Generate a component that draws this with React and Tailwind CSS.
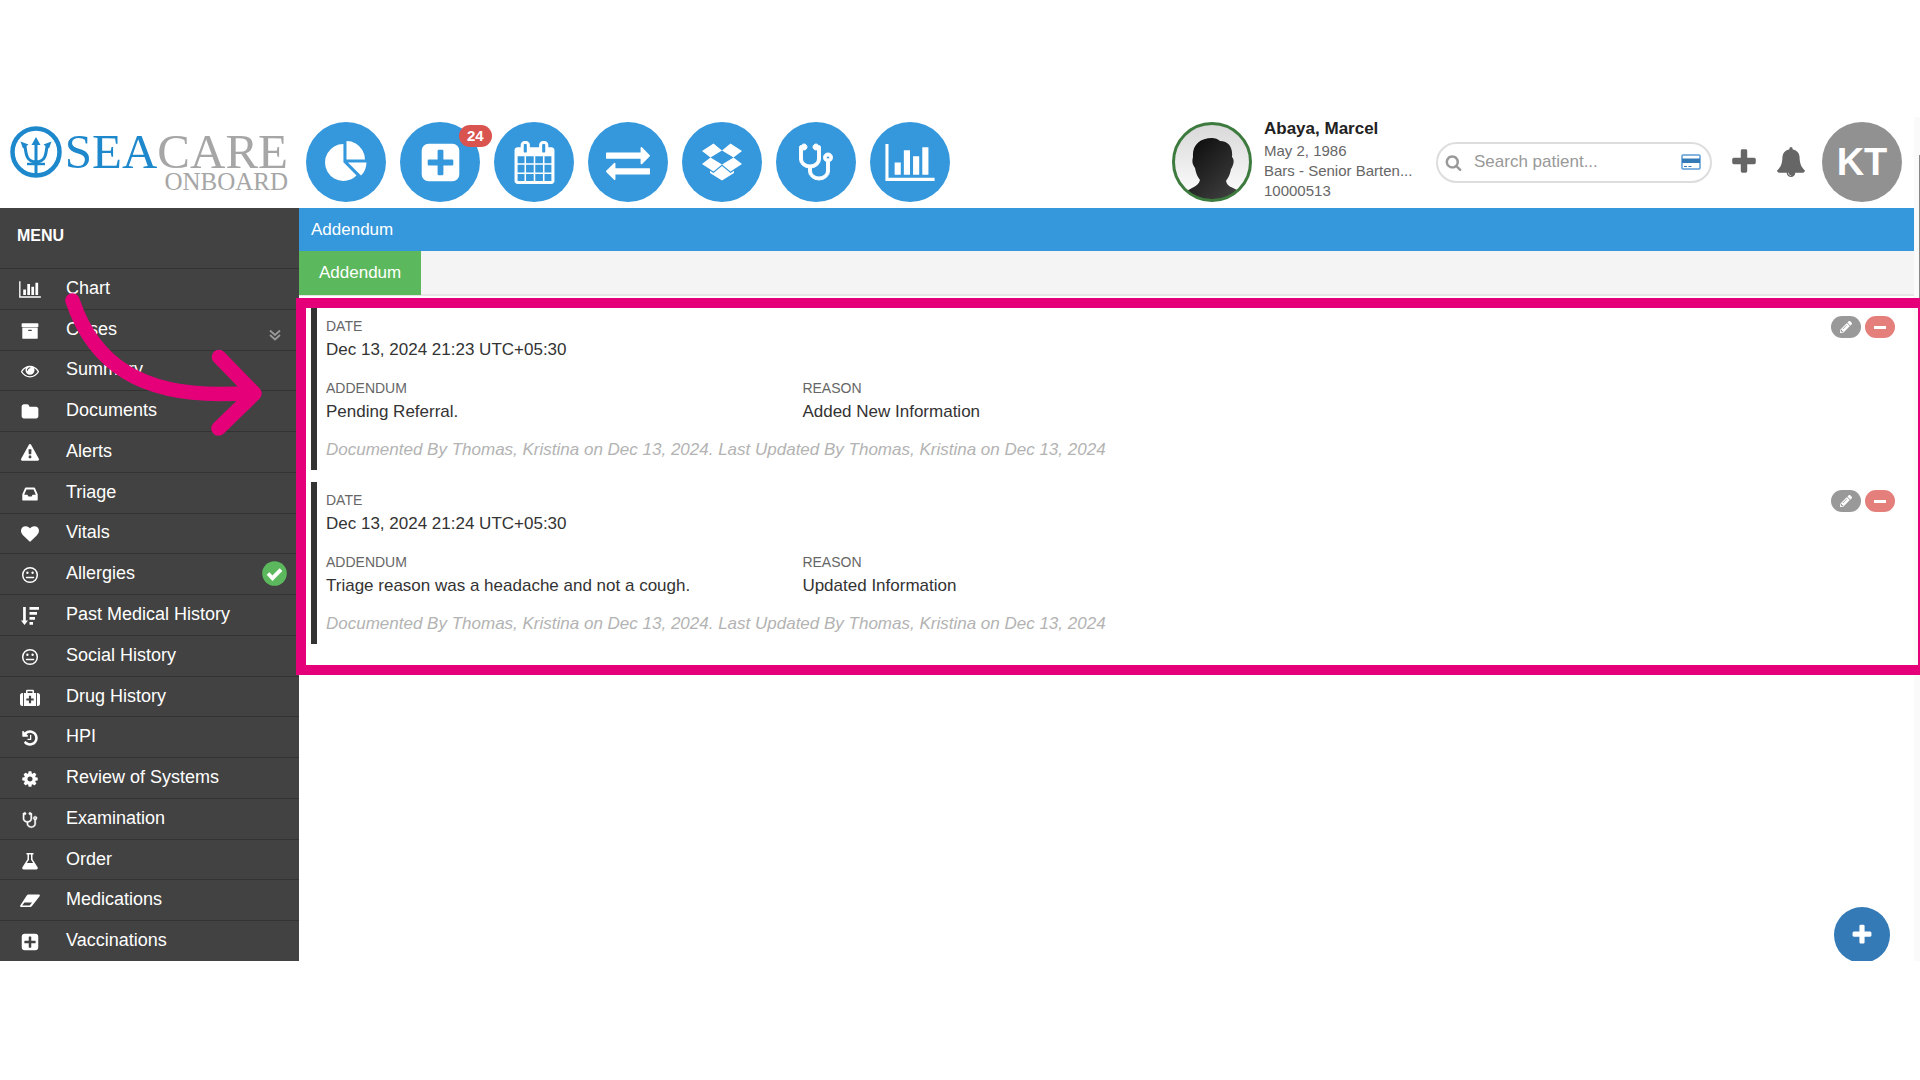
import React, { useState } from 'react';
import { FaPencilAlt } from 'react-icons/fa';

// --- SVG Icons ---
const Glyph = ({ d, className, viewBox = '0 0 1792 1792' }) => (
    <svg xmlns="http://www.w3.org/2000/svg" viewBox={viewBox} fill="currentColor" className={className} aria-hidden="true"><path d={d}></path></svg>
);
const BarChartIcon = ({ className }) => (
    <Glyph className={className} viewBox="0 0 2048 1792" d="M640 896v512h-256v-512h256zm384-512v1024h-256v-1024h256zm1024 1152v128h-2048v-1536h128v1408h1920zm-640-896v768h-256v-768h256zm384-384v1152h-256v-1152h256z" />
);
const PieChartIcon = ({ className }) => (
    <Glyph className={className} d="M768 890l546 546q-106 108-247.5 168t-298.500 60q-209 0-385.500-103t-279.500-279.500-103-385.500 103-385.500 279.500-279.500 385.500-103v762zm187 6h773q0 157-60 298.500t-168 247.500zm709-128h-768v-768q209 0 385.500 103t279.500 279.500 103 385.500z" />
);
const PlusSquareIcon = ({ className }) => (
    <svg viewBox="0 0 24 24" fill="currentColor" className={className} aria-hidden="true"><path fillRule="evenodd" d="M5 1h14a4 4 0 0 1 4 4v14a4 4 0 0 1-4 4H5a4 4 0 0 1-4-4V5a4 4 0 0 1 4-4zM11 4.500a.7.7 0 0 0-.7.7v5.100H5.200a.7.7 0 0 0-.7.7v2a.7.7 0 0 0 .7.7h5.100v5.100a.7.7 0 0 0 .7.7h2a.7.7 0 0 0 .7-.7v-5.100h5.100a.7.7 0 0 0 .7-.7v-2a.7.7 0 0 0-.7-.7h-5.100V5.200a.7.7 0 0 0-.7-.7z"></path></svg>
);
const CalendarIcon = ({ className }) => (
    <Glyph className={className} d="M192 1664h288v-288h-288v288zm352 0h320v-288h-320v288zm-352-352h288v-320h-288v320zm352 0h320v-320h-320v320zm-352-384h288v-288h-288v288zm736 736h320v-288h-320v288zm-384-736h320v-288h-320v288zm768 736h288v-288h-288v288zm-384-352h320v-320h-320v320zm-352-864v-288q0-13-9.500-22.500t-22.500-9.500h-64q-13 0-22.500 9.500t-9.500 22.500v288q0 13 9.500 22.500t22.500 9.500h64q13 0 22.500-9.500t9.500-22.500zm736 864h288v-320h-288v320zm-384-384h320v-288h-320v288zm384 0h288v-288h-288v288zm32-480v-288q0-13-9.500-22.500t-22.500-9.500h-64q-13 0-22.500 9.500t-9.500 22.500v288q0 13 9.500 22.500t22.500 9.500h64q13 0 22.500-9.500t9.500-22.500zm384-64v1280q0 52-38 90t-90 38h-1408q-52 0-90-38t-38-90v-1280q0-52 38-90t90-38h128v-96q0-66 47-113t113-47h64q66 0 113 47t47 113v96h384v-96q0-66 47-113t113-47h64q66 0 113 47t47 113v96h128q52 0 90 38t38 90z" />
);
const ExchangeIcon = ({ className }) => (
    <Glyph className={className} d="M1792 1184v192q0 13-9.500 22.500t-22.500 9.500h-1376v192q0 13-9.500 22.500t-22.500 9.500q-12 0-24-10l-319-320q-9-9-9-22 0-14 9-23l320-320q9-9 23-9 13 0 22.500 9.500t9.500 22.500v192h1376q13 0 22.500 9.500t9.500 22.500zm0-544q0 14-9 23l-320 320q-9 9-23 9-13 0-22.500-9.500t-9.500-22.500v-192h-1376q-13 0-22.500-9.500t-9.500-22.500v-192q0-13 9.500-22.500t22.500-9.500h1376v-192q0-14 9-23t23-9q12 0 24 10l319 319q9 9 9 23z" />
);
const DropboxIcon = ({ className }) => (
    <Glyph className={className} viewBox="0 0 40 40" d="M11.500 1.500L20 8.500 8.500 15.500 0 9zM28.500 1.500L20 8.500 31.500 15.500 40 9zM8.500 15.500L20 22.500 11.500 29.500 0 22zM31.500 15.500L20 22.500 28.500 29.500 40 22zM20 24L28.500 31 32 28.800V31L20 38.500 8 31V28.800L11.500 31z" />
);
const StethoscopeIcon = ({ className }) => (
    <svg viewBox="0 0 1792 1792" fill="currentColor" stroke="currentColor" strokeWidth="40" className={className} aria-hidden="true"><path d="M1472 704q0-26-19-45t-45-19-45 19-19 45 19 45 45 19 45-19 19-45zm128 0q0 62-35.500 111t-92.500 70v395q0 159-131.500 271.500t-316.500 112.500-316.500-112.500-131.500-271.500v-132q-164-20-274-128t-110-252v-512q0-26 19-45t45-19q6 0 16 2 17-30 47-48t65-18q53 0 90.500 37.500t37.500 90.500-37.500 90.500-90.500 37.500q-33 0-64-18v402q0 106 94 181t226 75 226-75 94-181v-402q-31 18-64 18-53 0-90.500-37.500t-37.500-90.500 37.500-90.500 90.500-37.500q35 0 65 18t47 48q10-2 16-2 26 0 45 19t19 45v512q0 144-110 252t-274 128v132q0 106 94 181t226 75 226-75 94-181v-395q-57-21-92.500-70t-35.500-111q0-80 56-136t136-56 136 56 56 136z"></path></svg>
);
const ArchiveIcon = ({ className }) => (
    <Glyph className={className} d="M1088 832q0-26-19-45t-45-19h-256q-26 0-45 19t-19 45 19 45 45 19h256q26 0 45-19t19-45zm576-192v960q0 26-19 45t-45 19h-1408q-26 0-45-19t-19-45v-960q0-26 19-45t45-19h1408q26 0 45 19t19 45zm64-448v256q0 26-19 45t-45 19h-1536q-26 0-45-19t-19-45v-256q0-26 19-45t45-19h1536q26 0 45 19t19 45z" />
);
const EyeIcon = ({ className }) => (
    <Glyph className={className} d="M1664 960q-152-236-381-353 61 104 61 225 0 185-131.500 316.500t-316.500 131.500-316.500-131.500-131.500-316.500q0-121 61-225-229 117-381 353 133 205 333.500 326.500t434.500 121.500 434.500-121.500 333.500-326.500zm-720-384q0-20-14-34t-34-14q-125 0-214.500 89.500t-89.500 214.500q0 20 14 34t34 14 34-14 14-34q0-86 61-147t147-61q20 0 34-14t14-34zm848 384q0 34-20 69-140 230-376.500 368.500t-499.500 138.500-499.500-139-376.500-368q-20-35-20-69t20-69q140-229 376.500-368t499.500-139 499.500 139 376.500 368q20 35 20 69z" />
);
const FolderIcon = ({ className }) => (
    <Glyph className={className} d="M1728 608v704q0 92-66 158t-158 66h-1216q-92 0-158-66t-66-158v-960q0-92 66-158t158-66h320q92 0 158 66t66 158v32h672q92 0 158 66t66 158z" />
);
const WarningIcon = ({ className }) => (
    <Glyph className={className} d="M1024 1375v-190q0-14-9.500-23.500t-22.500-9.500h-192q-13 0-22.500 9.500t-9.500 23.500v190q0 14 9.500 23.500t22.500 9.500h192q13 0 22.500-9.500t9.500-23.500zm-2-374l18-459q0-12-10-19-13-11-24-11h-220q-11 0-24 11-10 7-10 21l17 457q0 10 10 16.500t24 6.500h185q14 0 23.500-6.500t10.500-16.500zm-14-934l768 1408q35 63-2 126-17 29-46.500 46t-63.500 17h-1536q-34 0-63.500-17t-46.500-46q-37-63-2-126l768-1408q17-31 47-49t65-18 65 18 47 49z" />
);
const InboxIcon = ({ className }) => (
    <Glyph className={className} d="M1151 960h316q-1-3-2.500-8.500t-2.500-7.500l-212-496h-708l-212 496q-1 3-2.500 8.500t-2.500 7.500h316l95 192h320zm513 30v482q0 26-19 45t-45 19h-1408q-26 0-45-19t-19-45v-482q0-62 25-123l238-552q10-25 36.500-42t52.500-17h832q26 0 52.500 17t36.500 42l238 552q25 61 25 123z" />
);
const HeartIcon = ({ className }) => (
    <Glyph className={className} d="M896 1664q-26 0-44-18l-624-602q-10-8-27.500-26t-55.500-65.500-68-97.500-53.500-121-23.500-138q0-220 127-344t351-124q62 0 126.500 21.500t120 58 95.500 68.500 76 68q36-36 76-68t95.500-68.500 120-58 126.500-21.500q224 0 351 124t127 344q0 221-229 450l-623 600q-18 18-44 18z" />
);
const MehIcon = ({ className }) => (
    <svg viewBox="0 0 18 18" fill="none" stroke="currentColor" strokeWidth="1.500" className={className} aria-hidden="true"><circle cx="9" cy="9" r="7.300" /><path d="M5.500 11.500h7" strokeLinecap="round" /><circle cx="6.400" cy="6.700" r="1.200" fill="currentColor" stroke="none" /><circle cx="11.600" cy="6.700" r="1.200" fill="currentColor" stroke="none" /></svg>
);
const SortAmountIcon = ({ className }) => (
    <Glyph className={className} viewBox="0 0 18 18" d="M2.100 0h2.700v13.500h2.200L3.500 18 0 13.500h2.100zM8.500 0H18v2.800H8.500zM8.500 5H16v2.800H8.500zM8.500 10h5.500v2.800H8.500zM8.500 15H12v2.800H8.500z" />
);
const MedkitIcon = ({ className }) => (
    <svg viewBox="0 0 20 18" fill="currentColor" className={className} aria-hidden="true"><path fillRule="evenodd" d="M3 4v13H2.500A2.500 2.500 0 0 1 0 14.500v-8A2.500 2.500 0 0 1 2.500 4zM17 4v13h.5a2.500 2.500 0 0 0 2.500-2.500v-8A2.500 2.500 0 0 0 17.500 4zM3.900 4H6V2a1.200 1.200 0 0 1 1.200-1.200h5.600A1.200 1.200 0 0 1 14 2v2h2.100v13H3.900zM7.500 4h5V2.300h-5zM8.900 6.800v2.600H6.300v2.200h2.600v2.600h2.200v-2.600h2.600V9.400h-2.600V6.800z"></path></svg>
);
const HistoryIcon = ({ className }) => (
    <Glyph className={className} d="M1664 896q0 156-61 298t-164 245-245 164-298 61q-172 0-327-72.500t-264-204.500q-7-10-6.500-22.500t8.500-20.500l137-138q10-9 25-9 16 2 23 12 73 95 179 147t225 52q104 0 198.500-40.500t163.500-109.500 109.500-163.500 40.500-198.500-40.500-198.500-109.500-163.500-163.500-109.500-198.500-40.500q-98 0-188 35.500t-160 101.500l137 138q31 30 14 69-17 40-59 40h-448q-26 0-45-19t-19-45v-448q0-42 40-59 39-17 69 14l130 129q107-101 244.500-156.500t284.500-55.500q156 0 298 61t245 164 164 245 61 298zm-640-288v448q0 14-9 23t-23 9h-320q-14 0-23-9t-9-23v-64q0-14 9-23t23-9h224v-352q0-14 9-23t23-9h64q14 0 23 9t9 23z" />
);
const CogIcon = ({ className }) => (
    <Glyph className={className} d="M1152 896q0-106-75-181t-181-75-181 75-75 181 75 181 181 75 181-75 75-181zm512-109v222q0 12-8 23t-20 13l-185 28q-19 54-39 91 35 50 107 138 10 12 10 25t-9 23q-27 37-99 108t-94 71q-12 0-26-9l-138-108q-44 23-91 38-16 136-29 186-7 28-36 28h-222q-14 0-24.500-8.500t-11.500-21.500l-28-184q-49-16-90-37l-141 107q-10 9-25 9-14 0-25-11-126-114-165-168-7-10-7-23 0-12 8-23 15-21 51-66.500t54-70.500q-27-50-41-99l-183-27q-13-2-21-12.500t-8-23.500v-222q0-12 8-23t19-13l186-28q14-46 39-92-40-57-107-138-10-12-10-24 0-10 9-23 26-36 98.500-107.500t94.500-71.500q13 0 26 10l138 107q44-23 91-38 16-136 29-186 7-28 36-28h222q14 0 24.500 8.500t11.500 21.500l28 184q49 16 90 37l142-107q9-9 24-9 13 0 25 10 129 119 165 170 7 8 7 22 0 12-8 23-15 21-51 66.500t-54 70.500q26 50 41 98l183 28q13 2 21 12.500t8 23.500z" />
);
const FlaskIcon = ({ className }) => (
    <svg viewBox="0 0 18 18" fill="currentColor" className={className} aria-hidden="true"><path fillRule="evenodd" d="M5.500 1h7v1.500h-1v4.700l5.100 8.100c.6 1-.1 2.200-1.300 2.200H2.700c-1.200 0-1.900-1.200-1.300-2.200l5.100-8.100V2.500h-1zM8 2.500v5.200L5.800 11h6.400L10 7.700V2.500z"></path></svg>
);
const EraserIcon = ({ className }) => (
    <svg viewBox="0 0 20 18" fill="currentColor" className={className} aria-hidden="true"><path fillRule="evenodd" d="M8.300 2.500h10.500c.9 0 1.400 1 .8 1.700l-7.800 10c-.4.500-.9.800-1.500.8H1.200c-.9 0-1.400-1-.8-1.700l6.500-10c.3-.5.800-.8 1.400-.8zM9.600 13.600l2.500-3.200H4.400l-2.200 3.200z"></path></svg>
);
const PlusIcon = ({ className }) => (
    <Glyph className={className} d="M1600 736v192q0 40-28 68t-68 28h-416v416q0 40-28 68t-68 28h-192q-40 0-68-28t-28-68v-416h-416q-40 0-68-28t-28-68v-192q0-40 28-68t68-28h416v-416q0-40 28-68t68-28h192q40 0 68 28t28 68v416h416q40 0 68 28t28 68z" />
);
const BellIcon = ({ className }) => (
    <Glyph className={className} d="M912 1696q0-16-16-16-59 0-101.500-42.500t-42.500-101.500q0-16-16-16t-16 16q0 73 51.500 124.500t124.500 51.500q16 0 16-16zm816-288q0 52-38 90t-90 38h-448q0 106-75 181t-181 75-181-75-75-181h-448q-52 0-90-38t-38-90q50-42 91-88t85-119.500 74.500-158.500 50-206 19.500-260q0-152 117-282.500t307-158.500q-8-19-8-39 0-40 28-68t68-28 68 28 28 68q0 20-8 39 190 28 307 158.500t117 282.500q0 139 19.500 260t50 206 74.500 158.500 85 119.500 91 88z" />
);
const SearchIcon = ({ className }) => (
    <Glyph className={className} d="M1216 832q0-185-131.500-316.500t-316.500-131.500-316.500 131.500-131.500 316.500 131.500 316.500 316.500 131.500 316.500-131.500 131.500-316.500zm512 832q0 52-38 90t-90 38q-54 0-90-38l-343-342q-179 124-399 124-143 0-273.500-55.500t-225-150-150-225-55.500-273.500 55.500-273.500 150-225 225-150 273.500-55.500 273.500 55.500 225 150 150 225 55.500 273.500q0 220-124 399l343 343q37 37 37 90z" />
);
const CardIcon = ({ className }) => (
    <svg viewBox="0 0 20 16" fill="none" className={className} aria-hidden="true"><rect x="1" y="1" width="18" height="14" rx="1" stroke="#5b9bd5" strokeWidth="1.500" /><path d="M1 4.500h18v4.500H1z" fill="#337ab7" /><path d="M3 12.500h3M7.500 12.500h3" stroke="#337ab7" strokeWidth="1.200" /></svg>
);
const ChevronsIcon = ({ className }) => (
    <svg viewBox="0 0 12 12" fill="none" stroke="currentColor" strokeWidth="1.800" className={className} aria-hidden="true"><path d="M1 1.500l5 4.500 5-4.500M1 6l5 4.500L11 6"></path></svg>
);
const CheckIcon = ({ className }) => (
    <svg viewBox="0 0 25 25" fill="none" className={className} aria-hidden="true"><circle cx="12.500" cy="12.500" r="12.300" fill="#5cb85c" /><path d="M6 12.500l4.500 4.700L19 8.600" stroke="#fff" strokeWidth="3.800"></path></svg>
);

const MENU = [
  { label: 'Chart', Icon: BarChartIcon, size: 'h-[19px] w-[22px]' },
  { label: 'Cases', Icon: ArchiveIcon, mark: 'more' },
  { label: 'Summary', Icon: EyeIcon },
  { label: 'Documents', Icon: FolderIcon },
  { label: 'Alerts', Icon: WarningIcon },
  { label: 'Triage', Icon: InboxIcon },
  { label: 'Vitals', Icon: HeartIcon },
  { label: 'Allergies', Icon: MehIcon, mark: 'done' },
  { label: 'Past Medical History', Icon: SortAmountIcon },
  { label: 'Social History', Icon: MehIcon },
  { label: 'Drug History', Icon: MedkitIcon, size: 'h-[18px] w-[20px]' },
  { label: 'HPI', Icon: HistoryIcon },
  { label: 'Review of Systems', Icon: CogIcon },
  { label: 'Examination', Icon: StethoscopeIcon },
  { label: 'Order', Icon: FlaskIcon },
  { label: 'Medications', Icon: EraserIcon, size: 'h-[18px] w-[20px]' },
  { label: 'Vaccinations', Icon: PlusSquareIcon },
];

const SHORTCUTS = [
  { label: 'Dashboard', Icon: PieChartIcon, size: 'size-[43px]' },
  { label: 'New cases', Icon: PlusSquareIcon, size: 'size-[41px]', count: 24 },
  { label: 'Calendar', Icon: CalendarIcon, size: 'size-[43px]' },
  { label: 'Transfers', Icon: ExchangeIcon, size: 'size-[44px]' },
  { label: 'Inventory', Icon: DropboxIcon, size: 'size-[40px]' },
  { label: 'Examinations', Icon: StethoscopeIcon, size: 'size-[42px]' },
  { label: 'Reports', Icon: BarChartIcon, size: 'h-[43px] w-[50px]' },
];

const SIGNATURE = 'Documented By Thomas, Kristina on Dec 13, 2024. Last Updated By Thomas, Kristina on Dec 13, 2024';

const ENTRIES = [
  { date: 'Dec 13, 2024 21:23 UTC+05:30', addendum: 'Pending Referral.', reason: 'Added New Information' },
  { date: 'Dec 13, 2024 21:24 UTC+05:30', addendum: 'Triage reason was a headache and not a cough.', reason: 'Updated Information' },
];

const Logo = () => (
  <a href="#" className="flex w-[278px] shrink-0 pt-1 font-['Liberation_Serif',serif]">
    <svg viewBox="0 0 52 52" fill="none" stroke="#1e88cc" className="size-[52px] shrink-0" aria-hidden="true">
      <circle cx="26" cy="26" r="23.500" strokeWidth="4.500" />
      <path d="M26 17v31M15 20c1 9 2 16 11 16s10-7 11-16" strokeWidth="3" />
      <path d="M26 11l4.500 8h-9zM10.500 15.500l8 3-5.500 4zM41.500 15.500l-8 3 5.500 4z" fill="#1e88cc" stroke="none" />
      <path d="M17 38h18" strokeWidth="2.500" />
    </svg>
    <span className="flex flex-1 flex-col items-end">
      <span className="text-[49px] leading-[52px] text-[#1e88cc]">SEA<span className="text-[#a6a6a6]">CARE</span></span>
      <span className="-mt-[6px] text-[25px] leading-5 text-[#a6a6a6]">ONBOARD</span>
    </span>
  </a>
);

const Portrait = () => (
  <svg viewBox="0 0 80 80" className="size-20 shrink-0" role="img" aria-label="Abaya, Marcel">
    <defs>
      <linearGradient id="backdrop" x1="0" y1="0" x2="0" y2="1"><stop offset="0" stopColor="#d8d8d8" /><stop offset="1" stopColor="#fff" /></linearGradient>
      <linearGradient id="figure" x1="0" y1="0" x2="1" y2="1"><stop offset="0" stopColor="#050505" /><stop offset="1" stopColor="#4a4a4a" /></linearGradient>
      <clipPath id="round"><circle cx="40" cy="40" r="38" /></clipPath>
    </defs>
    <circle cx="40" cy="40" r="38" fill="url(#backdrop)" />
    <path clipPath="url(#round)" fill="url(#figure)" d="M40 16c3 0 6 1 8 3 9 0 13 7 12 16 2 2 2 5 1 8-1 2-1 3-2 4-1 6-3 9-5 12 1 4 3 5 7 7 6 3 9 4 13 8v8H7v-8c5-4 8-5 13-8 4-2 7-4 8-8-3-4-4-7-5-12-3-4-3-7-2-11-1-12 7-19 19-19z" />
    <circle cx="40" cy="40" r="38.500" fill="none" stroke="#3c7a3e" strokeWidth="3" />
  </svg>
);

const Header = () => {
  const [query, setQuery] = useState('');

  return (
    <header className="flex h-[91px] items-start pt-[5px] pr-3 pl-[10px]">
      <Logo />
      <nav className="ml-[18px] flex gap-[14px]">
        {SHORTCUTS.map(({ label, Icon, size, count }) => (
          <button key={label} type="button" aria-label={label} className="relative flex size-20 items-center justify-center rounded-full bg-[#3598dc] text-white">
            <Icon className={size} />
            {count && (
              <span className="absolute top-[3px] left-[59px] rounded-full bg-[#d9534f] px-2 text-[15px] leading-[22px] font-bold">{count}</span>
            )}
          </button>
        ))}
      </nav>

      {/* Patient, search, user */}
      <div className="ml-auto flex h-20 items-center">
        <Portrait />
        <div className="ml-3 w-[172px] pb-[6px] text-[15px] leading-5 text-[#666]">
          <p className="text-[17px] leading-6 font-bold text-[#222]">Abaya, Marcel</p>
          <p>May 2, 1986</p>
          <p>Bars - Senior Barten...</p>
          <p>10000513</p>
        </div>
        <label className="flex h-[41px] w-[276px] items-center rounded-full border-2 border-[#ddd] px-[7px] text-[#999]">
          <SearchIcon className="size-[17px] shrink-0" />
          <input
            type="text"
            aria-label="Search patient"
            value={query}
            onChange={(e) => setQuery(e.target.value)}
            placeholder="Search patient..."
            className="ml-3 min-w-0 flex-1 text-[17px] text-[#444] placeholder:text-[#999] focus:outline-none"
          />
          <CardIcon className="mr-[2px] h-4 w-5 shrink-0" />
        </label>
        <button type="button" aria-label="Add" className="ml-[17px] text-[#666]"><PlusIcon className="size-[30px]" /></button>
        <button type="button" aria-label="Notifications" className="ml-[17px] text-[#666]"><BellIcon className="size-[30px]" /></button>
        <button type="button" className="ml-4 size-20 rounded-full bg-[#919191] text-[38px] font-bold text-white">KT</button>
      </div>
    </header>
  );
};

const Sidebar = () => (
  <aside className="relative flex w-[299px] shrink-0 flex-col bg-[#424242] text-white">
    <h2 className="px-[17px] pt-4 pb-5 text-base font-bold">MENU</h2>
    <ul className="flex flex-1 flex-col">
      {MENU.map(({ label, Icon, size = 'size-[18px]', mark }) => (
        <li key={label} className="flex flex-1 border-t border-[#333]">
          <a href="#" className="flex flex-1 items-center pr-3 pb-[2px] text-lg leading-6">
            <span className="flex w-[59px] justify-center pt-1"><Icon className={size} /></span>
            <span className="ml-[7px]">{label}</span>
            {mark === 'more' && <ChevronsIcon className="mt-3 mr-[6px] ml-auto size-3 text-[#999]" />}
            {mark === 'done' && <CheckIcon className="ml-auto size-[25px]" />}
          </a>
        </li>
      ))}
    </ul>
    {/* Pointer towards the addendum list */}
    <svg viewBox="0 0 200 140" fill="none" stroke="#e5007a" strokeWidth="14.500" strokeLinecap="round" strokeLinejoin="round" className="pointer-events-none absolute top-[85px] left-[62px] h-[140px] w-[200px] overflow-visible" aria-hidden="true">
      <path d="M10.500 7.500C30 66 75 110 190 99.500M157 64l35.500 36.500-36 35"></path>
    </svg>
  </aside>
);

const Field = ({ label, value, className }) => (
  <div className={className}>
    <dt className="text-sm leading-5 text-[#666]">{label}</dt>
    <dd className="text-[17px] leading-7 text-[#333]">{value}</dd>
  </div>
);

const Entry = ({ date, addendum, reason }) => (
  <article className="relative border-l-[6px] border-[#333] py-2 pl-[9px]">
    <dl className="flex flex-wrap gap-y-[14px]">
      <Field label="DATE" value={date} className="w-full" />
      <Field label="ADDENDUM" value={addendum} className="w-[30%]" />
      <Field label="REASON" value={reason} />
    </dl>
    <p className="mt-3 text-[17px] leading-6 text-[#b3b3b3] italic">{SIGNATURE}</p>
    <div className="absolute top-2 right-[19px] flex gap-1 text-white">
      <button type="button" aria-label="Edit" className="flex h-[22px] w-[30px] items-center justify-center rounded-full bg-[#999]"><FaPencilAlt className="size-3" /></button>
      <button type="button" aria-label="Remove" className="flex h-[22px] w-[30px] items-center justify-center rounded-full bg-[#e57f7c]"><span className="h-[3px] w-3 bg-white" /></button>
    </div>
  </article>
);

const App = () => (
  <div className="flex min-h-screen flex-col bg-white pt-[117px] pb-[119px] font-['Liberation_Sans',Arial,sans-serif]">
    <div className="flex flex-1 overflow-hidden">
      <div className="flex min-w-0 flex-1 flex-col">
        <Header />
        <div className="flex flex-1">
          <Sidebar />
          <main className="relative flex min-w-0 flex-1 flex-col">
            <h1 className="bg-[#3598dc] px-3 text-[17px] leading-[43px] text-white">Addendum</h1>
            <div className="flex border-b-2 border-[#e5e5e5] bg-[#f4f4f4]">
              <button type="button" className="-mb-px bg-[#5cb85c] px-5 text-[17px] leading-[44px] text-white">Addendum</button>
            </div>
            <section className="relative z-10 mt-[2px] flex flex-col gap-3 pt-[10px] pb-[31px] pl-3">
              {ENTRIES.map((entry) => <Entry key={entry.date} {...entry} />)}
              <div className="pointer-events-none absolute inset-y-0 -right-[14px] -left-[3px] border-10 border-[#e5007a]" />
            </section>
            <button type="button" aria-label="Add addendum" className="absolute right-6 -bottom-[2px] flex size-14 items-center justify-center rounded-full bg-[#337ab7] text-white">
              <PlusIcon className="size-6" />
            </button>
          </main>
        </div>
      </div>
      {/* Scroll track */}
      <div className="flex w-[6px] shrink-0 flex-col items-end bg-[#fafafa] pt-[38px]">
        <div className="h-[440px] w-px bg-[#888]" />
      </div>
    </div>
  </div>
);

export default App;
